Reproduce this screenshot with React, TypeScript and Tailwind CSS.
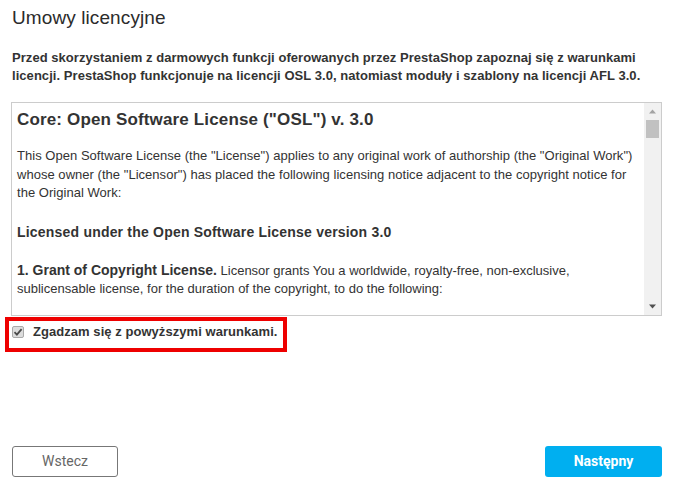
import React, { useState } from 'react';

const LicenseScrollbar: React.FC = () => (
  <div className="flex w-[17px] shrink-0 flex-col items-center bg-[#f1f1f1]">
    <svg width="17" height="17" viewBox="0 0 17 17" className="shrink-0">
      <path d="M5 10.5 L8.5 6.5 L12 10.5 Z" fill="#a3a3a3" />
    </svg>
    <div className="h-[18px] w-[13px] bg-[#c1c1c1]" />
    <div className="flex-1" />
    <svg width="17" height="17" viewBox="0 0 17 17" className="shrink-0">
      <path d="M5 6.5 L8.5 10.5 L12 6.5 Z" fill="#505050" />
    </svg>
  </div>
);

const CheckMark: React.FC<{ checked: boolean }> = ({ checked }) => (
  <span className="flex h-[12px] w-[12px] items-center justify-center rounded-[2px] border border-[#a9a9a9] bg-[#dcdcdc]">
    {checked && (
      <svg width="10" height="10" viewBox="0 0 10 10">
        <path d="M1.5 5.2 L3.9 7.6 L8.6 2.2" fill="none" stroke="#4a4a4a" strokeWidth="1.8" />
      </svg>
    )}
  </span>
);

export default function App() {
  const [agreed, setAgreed] = useState(true);

  return (
    <div className="flex h-[495px] w-[675px] flex-col bg-white pl-3 pr-[13px] text-[#333] font-['Liberation_Sans',Arial,sans-serif]">
      <h1 className="mt-[8px] text-[19px] leading-[20px] font-normal tracking-[0.1px] text-[#2b2b2b]">Umowy licencyjne</h1>

      <p className="mt-[21px] text-[13px] leading-[18px] font-bold tracking-[0.05px] text-[#333]">
        Przed skorzystaniem z darmowych funkcji oferowanych przez PrestaShop zapoznaj się z warunkami licencji. PrestaShop funkcjonuje na licencji OSL 3.0, natomiast moduły i szablony na licencji AFL 3.0.
      </p>

      <div className="-ml-px mt-[17px] flex h-[214px] border border-[#cccccc]">
        <div className="flex-1 overflow-hidden pl-[5px] pr-[8px] pt-[7px] text-[13px] leading-[18.5px] text-[#333]">
          <h2 className="text-[17px] leading-[20px] font-bold tracking-[0.15px]">Core: Open Software License ("OSL") v. 3.0</h2>
          <p className="mt-[17px] tracking-[0.03px]">
            This Open Software License (the "License") applies to any original work of authorship (the "Original Work") whose owner (the "Licensor") has placed the following licensing notice adjacent to the copyright notice for the Original Work:
          </p>
          <p className="mt-[20px] text-[14px] font-bold leading-[18px] tracking-[0.2px]">Licensed under the Open Software License version 3.0</p>
          <p className="mt-[20px]">
            <strong className="text-[14px]">1. Grant of Copyright License.</strong> Licensor grants You a worldwide, royalty-free, non-exclusive, sublicensable license, for the duration of the copyright, to do the following:
          </p>
        </div>
        <LicenseScrollbar />
      </div>

      <div className="-ml-[7px] mt-px flex h-[35px] w-[282px] items-center border-4 border-[#ee0000] pb-[6px] pl-[3px]">
        <label className="flex cursor-pointer items-center gap-[9px] text-[13px] font-bold tracking-[0.05px] text-[#333]">
          <input type="checkbox" className="sr-only" checked={agreed} onChange={() => setAgreed(!agreed)} />
          <CheckMark checked={agreed} />
          Zgadzam się z powyższymi warunkami.
        </label>
      </div>

      <div className="mt-auto mb-[18px] flex items-center justify-between">
        <button className="h-[31px] w-[106px] rounded-[3px] border border-[#777] bg-white text-[14px] text-[#666] font-['Liberation_Sans_Narrow',Roboto,sans-serif]">
          Wstecz
        </button>
        <button className="h-[31px] w-[117px] rounded-[3px] bg-[#00aff0] text-[14px] font-bold text-white font-['Liberation_Sans_Narrow',Roboto,sans-serif]">
          Następny
        </button>
      </div>
    </div>
  );
}
